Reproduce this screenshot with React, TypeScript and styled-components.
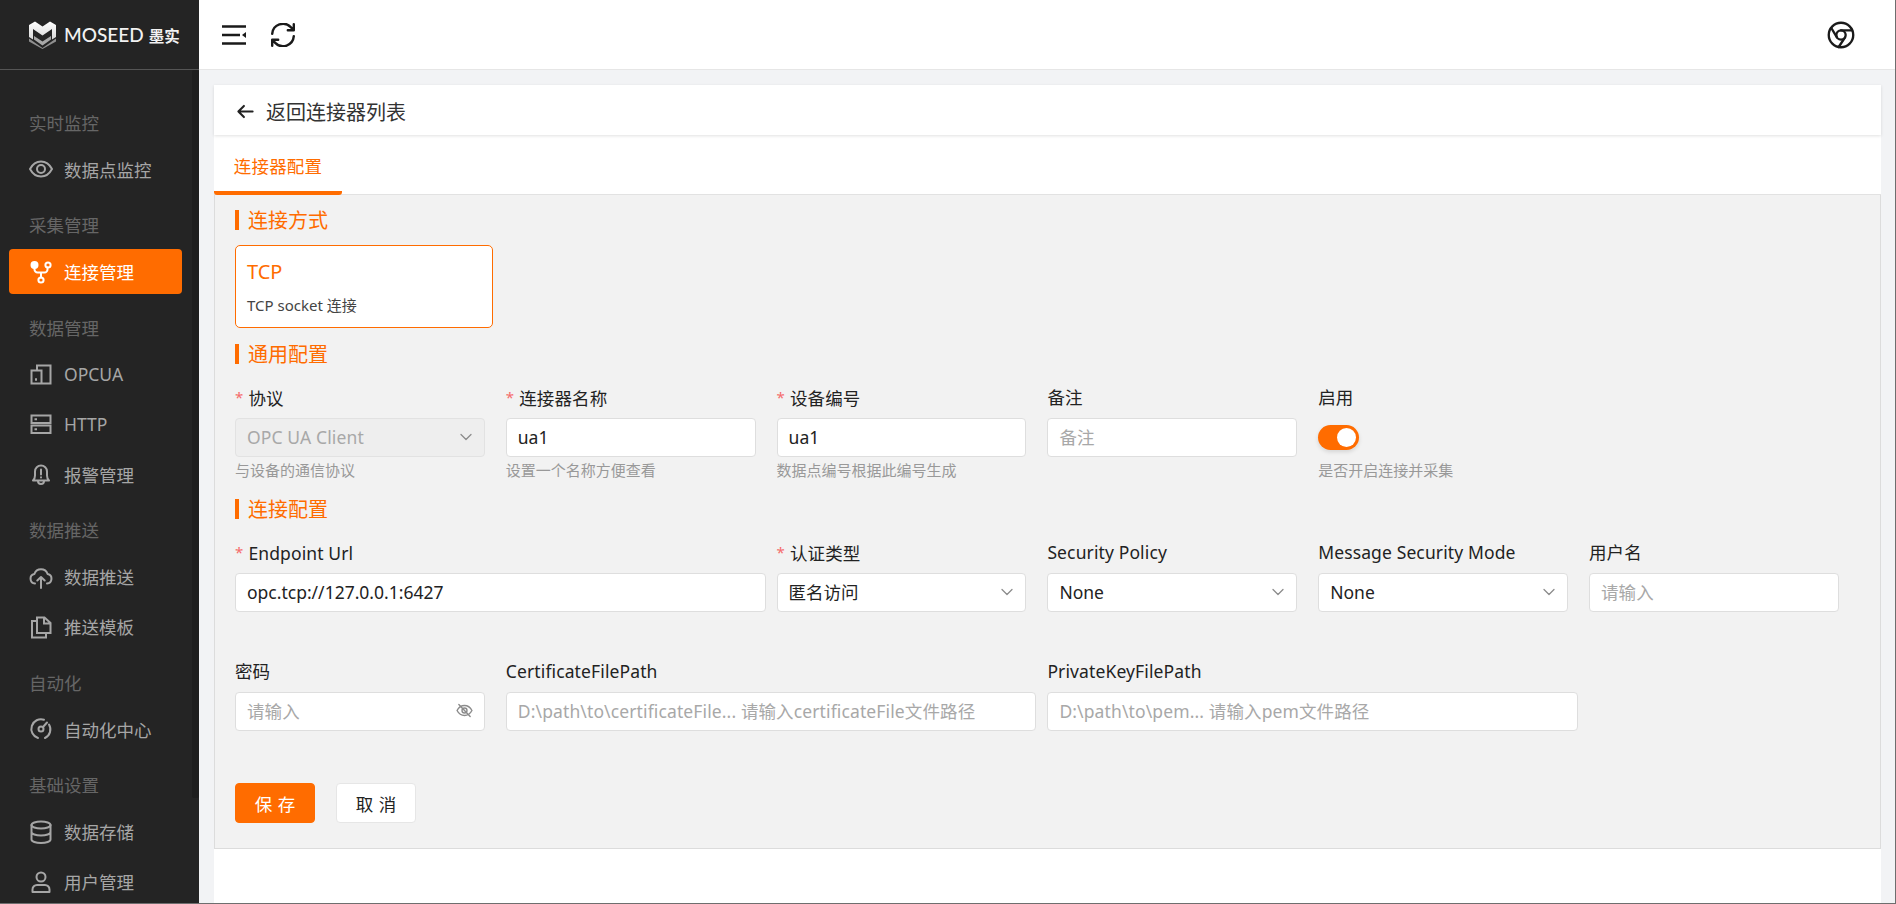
import React from "react";
import styled, { createGlobalStyle } from "styled-components";

const FONT = `"Noto Sans", "Noto Sans CJK SC", sans-serif`;
const ORANGE = "#ff6c00";

const Global = createGlobalStyle`
  html, body { margin: 0; padding: 0; height: 100%; overflow: hidden; }
  body { font-family: ${FONT}; font-size: 17.5px; color: #222; }
  * { box-sizing: border-box; }
`;

const Shell = styled.div`
  width: 1896px;
  height: 904px;
  display: flex;
  overflow: hidden;
  background: #f2f3f5;
  border-right: 1px solid #6e6e6e;
  border-bottom: 1px solid #6e6e6e;
`;

const Sidebar = styled.aside`
  position: relative;
  width: 199px;
  flex: none;
  background: #242424;
  overflow: hidden;
`;

const Brand = styled.div`
  height: 70px;
  display: flex;
  align-items: center;
  padding-left: 29px;
  border-bottom: 1px solid #555;
`;

const BrandName = styled.span`
  margin-left: 8px;
  font-family: "Lato", "Noto Sans CJK SC", sans-serif;
  font-size: 19px;
  font-weight: 500;
  color: #f2f2f2;
  white-space: nowrap;
`;

const BrandCn = styled.span`
  margin-left: 5px;
  font-size: 15.5px;
  font-weight: 700;
`;

const ScrollTrack = styled.div`
  position: absolute;
  top: 70px;
  right: 0;
  width: 7px;
  height: 728px;
  background: #1e1e1e;
  border-radius: 2px;
`;

const Nav = styled.nav`
  padding: 27.5px 17px 0 9px;
`;

const GroupLabel = styled.div`
  height: 49px;
  display: flex;
  align-items: center;
  padding-left: 20px;
  color: #666;
  font-size: 17.5px;
`;

const Group = styled.div`
  margin-bottom: 8.5px;
`;

const Item = styled.div<{ $active?: boolean }>`
  height: 45px;
  margin-bottom: 5px;
  display: flex;
  align-items: center;
  gap: 11px;
  padding-left: 20px;
  border-radius: 4px;
  font-size: 17.5px;
  white-space: nowrap;
  color: ${(p) => (p.$active ? "#fff" : "#a6a6a6")};
  background: ${(p) => (p.$active ? ORANGE : "transparent")};
`;

const NavSvg = styled.svg`
  width: 24px;
  height: 24px;
  flex: none;
  fill: none;
  stroke: currentColor;
  stroke-width: 2;
  stroke-linecap: round;
  stroke-linejoin: round;
`;

const Main = styled.main`
  flex: 1;
  min-width: 0;
  display: flex;
  flex-direction: column;
`;

const Header = styled.header`
  height: 70px;
  flex: none;
  display: flex;
  align-items: center;
  padding: 0 40px 0 22px;
  background: #fff;
  border-bottom: 1px solid #e6e6e6;
`;

const HeaderSpacer = styled.div`
  flex: 1;
`;

const HeaderSvg = styled.svg<{ $left?: number }>`
  display: block;
  margin-left: ${(p) => p.$left ?? 0}px;
  fill: none;
  stroke: #1a1a1a;
  stroke-linecap: round;
  stroke-linejoin: round;
`;

const Page = styled.div`
  flex: 1;
  min-height: 0;
  padding: 15px 14px 0 15px;
  display: flex;
`;

const Card = styled.div`
  flex: 1;
  min-width: 0;
  display: flex;
  flex-direction: column;
  background: #fff;
`;

const BackBar = styled.div`
  height: 50px;
  flex: none;
  display: flex;
  align-items: center;
  gap: 11px;
  padding: 2px 0 0 22px;
  font-size: 20px;
  color: #333;
  box-shadow: 0 1px 3px rgba(0, 0, 0, 0.12);
`;

const Tabs = styled.div`
  height: 60px;
  flex: none;
  display: flex;
  border-bottom: 1px solid #e2e2e2;
`;

const Tab = styled.div`
  width: 128px;
  height: 60px;
  display: flex;
  align-items: center;
  justify-content: center;
  padding-top: 4px;
  color: ${ORANGE};
  font-size: 17.5px;
  letter-spacing: 0.2px;
  border-bottom: 4px solid ${ORANGE};
  border-radius: 0 0 3px 3px;
`;

const Panel = styled.div`
  flex: none;
  padding: 15px 0 25px 20px;
  background: #f2f2f2;
  border-left: 1px solid #dcdcdc;
  border-right: 1px solid #dcdcdc;
  border-bottom: 1px solid #dcdcdc;
`;

const SectionTitle = styled.div<{ $top?: number }>`
  height: 20px;
  margin-top: ${(p) => p.$top ?? 0}px;
  display: flex;
  align-items: center;
  padding: 2px 0 0 9px;
  border-left: 4px solid ${ORANGE};
  color: ${ORANGE};
  font-size: 20px;
  line-height: 20px;
`;

const ModeCard = styled.div`
  width: 258px;
  height: 83px;
  margin-top: 15px;
  padding: 13px 11px;
  background: #fff;
  border: 1px solid ${ORANGE};
  border-radius: 5px;
`;

const ModeTitle = styled.div`
  height: 26px;
  line-height: 26px;
  color: ${ORANGE};
  font-size: 20px;
`;

const ModeDesc = styled.div`
  margin-top: 10px;
  height: 20px;
  line-height: 20px;
  color: #444;
  font-size: 15px;
`;

const FormGrid = styled.div<{ $top: number }>`
  margin-top: ${(p) => p.$top}px;
  display: grid;
  grid-template-columns: repeat(6, 270.8px);
  row-gap: 49.5px;
`;

const Field = styled.div<{ $span?: number }>`
  grid-column: span ${(p) => p.$span ?? 1};
  padding-right: ${(p) => (p.$span === 2 ? 11 : 21)}px;
  min-width: 0;
`;

const Label = styled.div`
  height: 20px;
  line-height: 18px;
  margin-bottom: 10px;
  font-size: 17.5px;
  letter-spacing: 0.12px;
  color: #222;
  white-space: nowrap;
`;

const Star = styled.span`
  color: #f56c6c;
  font-size: 15px;
  margin-right: 5px;
  vertical-align: 2px;
`;

const InputBox = styled.div<{ $disabled?: boolean }>`
  height: 39px;
  display: flex;
  align-items: center;
  justify-content: space-between;
  padding: 0 11px 2px;
  border: 1px solid ${(p) => (p.$disabled ? "#e2e2e2" : "#dedede")};
  border-radius: 4px;
  background: ${(p) => (p.$disabled ? "#eeeeee" : "#fff")};
  font-size: 17.5px;
  white-space: nowrap;
  overflow: hidden;
`;

const Value = styled.span<{ $muted?: boolean }>`
  color: ${(p) => (p.$muted ? "#a8a8a8" : "#222")};
  letter-spacing: ${(p) => (p.$muted ? "0.12px" : "0")};
`;

const Help = styled.div`
  height: 20px;
  line-height: 20px;
  margin-top: 3px;
  color: #999;
  font-size: 15px;
  white-space: nowrap;
`;

const SwitchWrap = styled.div`
  height: 39px;
  display: flex;
  align-items: center;
`;

const SwitchTrack = styled.div`
  position: relative;
  width: 41px;
  height: 25px;
  border-radius: 13px;
  background: ${ORANGE};
  box-shadow: 0 2px 4px rgba(0, 0, 0, 0.12);
`;

const SwitchKnob = styled.div`
  position: absolute;
  top: 3px;
  right: 3px;
  width: 19px;
  height: 19px;
  border-radius: 50%;
  background: #fff;
`;

const Actions = styled.div`
  margin-top: 52.5px;
  display: flex;
  gap: 21px;
`;

const Button = styled.button<{ $primary?: boolean }>`
  width: 80px;
  height: 40px;
  padding: 0;
  border-radius: 4px;
  font-family: ${FONT};
  font-size: 17.5px;
  word-spacing: 1px;
  border: 1px solid ${(p) => (p.$primary ? ORANGE : "#e6e6e6")};
  background: ${(p) => (p.$primary ? ORANGE : "#fff")};
  color: ${(p) => (p.$primary ? "#fff" : "#222")};
`;

const Icons: Record<string, React.ReactNode> = {
  eye: (
    <>
      <path d="M1 12C3.500 7.300 7.500 4.500 12 4.500s8.500 2.800 11 7.500c-2.500 4.700-6.500 7.500-11 7.500S3.500 16.700 1 12Z" />
      <circle cx="12" cy="12" r="4" />
    </>
  ),
  link: (
    <>
      <circle cx="5.500" cy="5" r="3" fill="currentColor" />
      <circle cx="19" cy="5" r="2.600" />
      <circle cx="12" cy="20" r="2.600" />
      <path d="M5.500 8v1.500a3 3 0 0 0 3 3h7a3 3 0 0 0 3-3V7.600M12 12.500v5" />
    </>
  ),
  opc: (
    <g strokeLinecap="butt" strokeLinejoin="miter">
      <path d="M2.500 8.500h10v13h-10zM8 8.500V3.500h13.500v18H12.500" />
      <path d="M6 17.500h2" strokeWidth="2.500" />
    </g>
  ),
  server: (
    <g strokeLinecap="butt" strokeLinejoin="miter">
      <rect x="2.500" y="3.500" width="19" height="7.500" />
      <rect x="2.500" y="13.500" width="19" height="7.500" />
      <path d="M5.500 7.300h2.500M5.500 17.300h2.500" />
    </g>
  ),
  bell: (
    <>
      <path d="M4 18.500c1.500-1.500 2-2.500 2-5V9.500a6 6 0 0 1 12 0v4c0 2.500.5 3.500 2 5Z" />
      <path d="M9 19a3 3 0 0 0 6 0M12 7.500v5M12 15.300v.2" />
    </>
  ),
  cloud: (
    <>
      <path d="M6 18.500a4.800 4.800 0 0 1-.600-9.500 7 7 0 0 1 13.200 0 4.800 4.800 0 0 1-.600 9.500" />
      <path d="M12 23v-11M8.300 15.500 12 12l3.700 3.500" />
    </>
  ),
  copy: (
    <g strokeLinecap="butt" strokeLinejoin="miter">
      <path d="M8 2.500h7.500l6 5.500v10H8zM15 2.500v6h6.500" />
      <path d="M8 6H3v16.500h14V18" />
    </g>
  ),
  gauge: (
    <>
      <path d="M9 21a9.500 9.500 0 0 1 6-18.300M20 7.500a9.500 9.500 0 0 1-4 13.500" />
      <circle cx="12" cy="12" r="2.500" />
      <path d="M14 10l4-4.500" />
    </>
  ),
  db: (
    <>
      <ellipse cx="12" cy="5" rx="9.500" ry="3.500" />
      <path d="M2.500 5v14.500c0 2 4.300 3.500 9.500 3.500s9.500-1.500 9.500-3.500V5M2.500 12c0 2 4.300 3.500 9.500 3.500s9.500-1.500 9.500-3.500" />
    </>
  ),
  user: (
    <>
      <circle cx="12" cy="7" r="4.500" />
      <path d="M3.500 22v-2.500a4.500 4.500 0 0 1 4.500-4.500h8a4.500 4.500 0 0 1 4.500 4.500V22Z" />
    </>
  ),
};

const NavIcon = ({ name }: { name: string }) => (
  <NavSvg viewBox="0 0 24 24">{Icons[name]}</NavSvg>
);

const nav = [
  { label: "实时监控", items: [{ icon: "eye", text: "数据点监控" }] },
  { label: "采集管理", items: [{ icon: "link", text: "连接管理", active: true }] },
  {
    label: "数据管理",
    items: [
      { icon: "opc", text: "OPCUA" },
      { icon: "server", text: "HTTP" },
      { icon: "bell", text: "报警管理" },
    ],
  },
  {
    label: "数据推送",
    items: [
      { icon: "cloud", text: "数据推送" },
      { icon: "copy", text: "推送模板" },
    ],
  },
  { label: "自动化", items: [{ icon: "gauge", text: "自动化中心" }] },
  {
    label: "基础设置",
    items: [
      { icon: "db", text: "数据存储" },
      { icon: "user", text: "用户管理" },
    ],
  },
];

const Logo = () => (
  <svg width="27" height="28" viewBox="0 0 27 28">
    <defs>
      <linearGradient id="logoTop" x1="0" y1="0" x2="0" y2="1">
        <stop offset="0" stopColor="#ffffff" />
        <stop offset="1" stopColor="#d8d8d8" />
      </linearGradient>
    </defs>
    <path
      d="M0 4 6 .5l7.500 5L21 .5 27 4v12l-4 2.500V8l-9.500 6.500L4 8v10.500L0 16Z"
      fill="url(#logoTop)"
    />
    <path d="M0 17.500 13.500 27 27 17.500v3L13.500 28 0 20.500Z" fill="#8f8f8f" />
    <path d="M5 15v3.500l8.500 6 8.500-6V15l-8.500 5.500Z" fill="#a8a8a8" />
  </svg>
);

const Chevron = () => (
  <svg width="14" height="14" viewBox="0 0 14 14" fill="none" stroke="#8c8c8c" strokeWidth="1.300" strokeLinecap="round" strokeLinejoin="round">
    <path d="M2 4.500 7 9.500l5-5" />
  </svg>
);

const EyeOff = () => (
  <svg width="17" height="17" viewBox="0 0 24 24" fill="none" stroke="#8c8c8c" strokeWidth="2" strokeLinecap="round" strokeLinejoin="round">
    <path d="M1.500 12C4 7.300 7.700 5 12 5s8 2.300 10.500 7c-2.500 4.700-6.200 7-10.500 7S4 16.700 1.500 12Z" />
    <circle cx="12" cy="12" r="3.500" />
    <path d="M4 3.500 20 20.500" />
  </svg>
);

type FieldProps = {
  label: string;
  required?: boolean;
  value?: string;
  placeholder?: string;
  select?: boolean;
  disabled?: boolean;
  help?: string;
  span?: number;
  eye?: boolean;
};

const FormField = ({ label, required, value, placeholder, select, disabled, help, span, eye }: FieldProps) => (
  <Field $span={span}>
    <Label>
      {required && <Star>*</Star>}
      {label}
    </Label>
    <InputBox $disabled={disabled}>
      <Value $muted={disabled || !value}>{value || placeholder}</Value>
      {select && <Chevron />}
      {eye && <EyeOff />}
    </InputBox>
    {help && <Help>{help}</Help>}
  </Field>
);

export default function App() {
  return (
    <Shell>
      <Global />
      <Sidebar>
        <Brand>
          <Logo />
          <BrandName>
            MOSEED<BrandCn>墨实</BrandCn>
          </BrandName>
        </Brand>
        <Nav>
          {nav.map((g) => (
            <Group key={g.label}>
              <GroupLabel>{g.label}</GroupLabel>
              {g.items.map((it) => (
                <Item key={it.text} $active={(it as { active?: boolean }).active}>
                  <NavIcon name={it.icon} />
                  {it.text}
                </Item>
              ))}
            </Group>
          ))}
        </Nav>
        <ScrollTrack />
      </Sidebar>
      <Main>
        <Header>
          <HeaderSvg width="26" height="20" viewBox="0 0 26 20" strokeWidth="2.400">
            <path d="M1 1.500h24M1 10h18M1 18.500h24" strokeLinecap="butt" />
            <path d="M25 7v6l-4-3Z" fill="#1a1a1a" stroke="none" />
          </HeaderSvg>
          <HeaderSvg $left={24} width="24" height="24" viewBox="2 2 20 20" strokeWidth="2">
            <path d="M3 11a9 9 0 0 1 15.500-5.500L21 8M21 3v5h-5M21 13a9 9 0 0 1-15.500 5.500L3 16M3 21v-5h5" />
          </HeaderSvg>
          <HeaderSpacer />
          <HeaderSvg width="28" height="28" viewBox="0 0 24 24" strokeWidth="2">
            <circle cx="12" cy="12" r="10.500" />
            <circle cx="12" cy="12" r="4" />
            <path d="M12 8h9.500M3.700 6 8.500 14M10 22.300 15.500 14" />
          </HeaderSvg>
        </Header>
        <Page>
          <Card>
            <BackBar>
              <svg width="19" height="19" viewBox="0 0 24 24" fill="none" stroke="#222" strokeWidth="2.600" strokeLinecap="round" strokeLinejoin="round">
                <path d="M21 12H3M10 5l-7 7 7 7" />
              </svg>
              返回连接器列表
            </BackBar>
            <Tabs>
              <Tab>连接器配置</Tab>
            </Tabs>
            <Panel>
              <SectionTitle>连接方式</SectionTitle>
              <ModeCard>
                <ModeTitle>TCP</ModeTitle>
                <ModeDesc>TCP socket 连接</ModeDesc>
              </ModeCard>
              <SectionTitle $top={16}>通用配置</SectionTitle>
              <FormGrid $top={24}>
                <FormField label="协议" required value="OPC UA Client" select disabled help="与设备的通信协议" />
                <FormField label="连接器名称" required value="ua1" help="设置一个名称方便查看" />
                <FormField label="设备编号" required value="ua1" help="数据点编号根据此编号生成" />
                <FormField label="备注" placeholder="备注" />
                <Field>
                  <Label>启用</Label>
                  <SwitchWrap>
                    <SwitchTrack>
                      <SwitchKnob />
                    </SwitchTrack>
                  </SwitchWrap>
                  <Help>是否开启连接并采集</Help>
                </Field>
              </FormGrid>
              <SectionTitle $top={19}>连接配置</SectionTitle>
              <FormGrid $top={24}>
                <FormField span={2} label="Endpoint Url" required value="opc.tcp://127.0.0.1:6427" />
                <FormField label="认证类型" required value="匿名访问" select />
                <FormField label="Security Policy" value="None" select />
                <FormField label="Message Security Mode" value="None" select />
                <FormField label="用户名" placeholder="请输入" />
                <FormField label="密码" placeholder="请输入" eye />
                <FormField span={2} label="CertificateFilePath" placeholder="D:\path\to\certificateFile... 请输入certificateFile文件路径" />
                <FormField span={2} label="PrivateKeyFilePath" placeholder="D:\path\to\pem... 请输入pem文件路径" />
              </FormGrid>
              <Actions>
                <Button $primary>保 存</Button>
                <Button>取 消</Button>
              </Actions>
            </Panel>
          </Card>
        </Page>
      </Main>
    </Shell>
  );
}
